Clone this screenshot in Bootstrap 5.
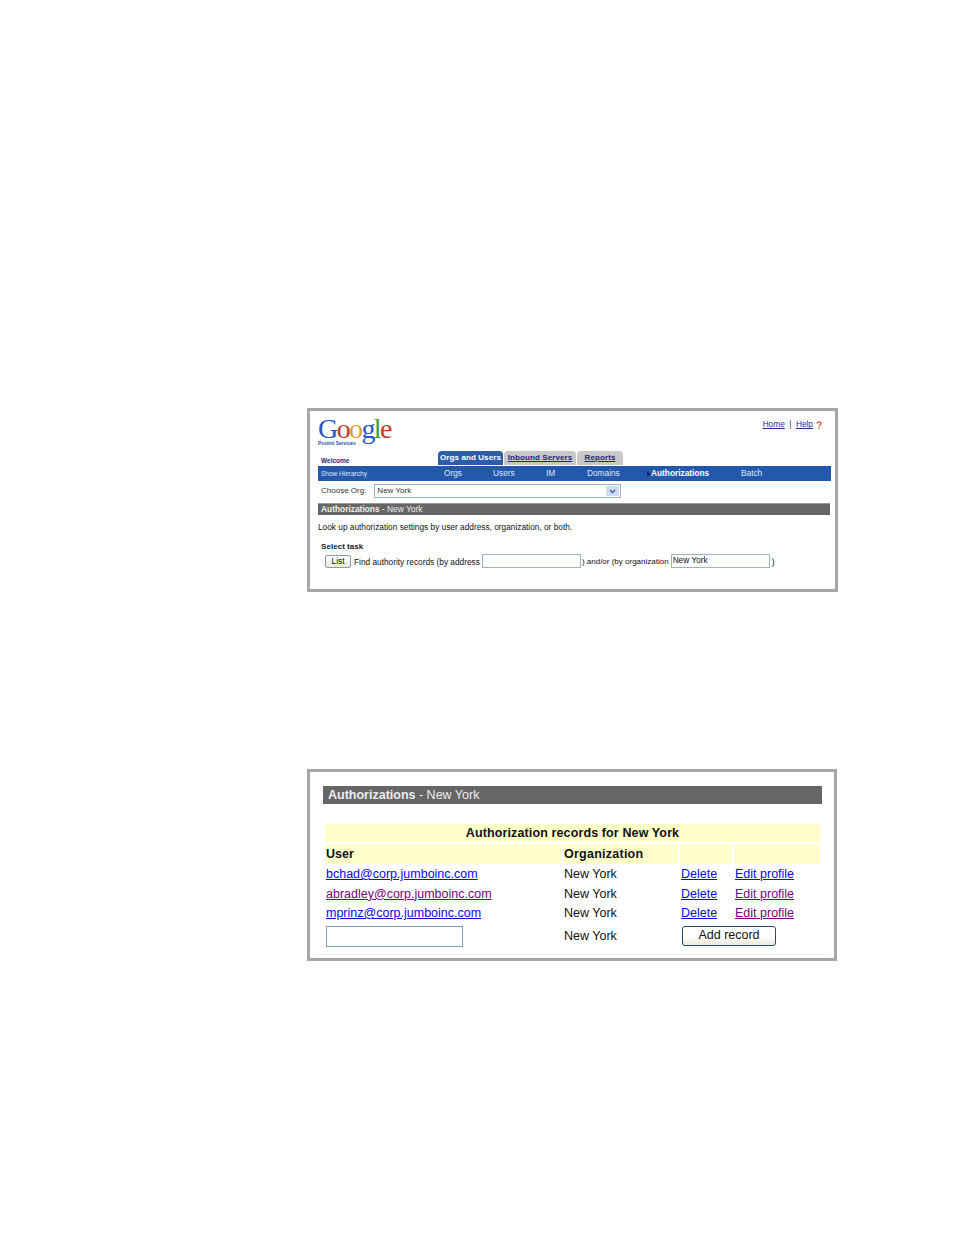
<!DOCTYPE html>
<html lang="en">
<head>
  <meta charset="UTF-8" />
  <title>Authorizations - New York</title>
  <link rel="stylesheet" href="https://cdn.jsdelivr.net/npm/bootstrap@5.3.0/dist/css/bootstrap.min.css" />
  <style>
    body {
      background: #fff;
      color: #111;
      font-family: "Liberation Sans", Arial, sans-serif;
      padding: 408px 0 0 307px;
    }
    a { color: #0a0ae6; }
    a.seen { color: #800080; }

    /* panels */
    .shot-frame {
      border: 3px solid #a6a6a6;
      background: #fff;
    }
    .shot-top { width: 531px; height: 184px; padding: 4px 4px 0 8px; font-size: 8.3px; }
    .shot-bottom { width: 530px; height: 192px; margin-top: 177px; padding: 14px 12px 0 13px; font-size: 12.5px; }

    /* top panel */
    .logo-row { height: 36px; padding-right: 9px; }
    .logo-word { font-family: "Liberation Serif", serif; font-size: 28px; line-height: 24px; letter-spacing: -1.6px; width: 76px; padding-top: 2px; height: 26px; }
    .logo-sub { font-size: 4.9px; font-weight: 700; color: #2a4fa8; line-height: 6px; width: 41px; white-space: nowrap; }
    .lg-b { color: #2a57c4; }
    .lg-r { color: #c8361f; }
    .lg-y { color: #d9a520; }
    .lg-g { color: #3c9a3c; }
    .top-links { font-size: 8.3px; padding-top: 3px; display: flex; align-items: center; height: 16px; }
    .top-links a { color: #2a2a90; }
    .top-links .sep { margin: 0 4.5px; color: #2a2a90; }
    .help-icon { margin-left: 3px; }
    .tab-row { height: 15px; }
    .welcome { width: 120px; padding-left: 3px; color: #2a2a70; font-size: 6.5px; font-weight: 700; padding-top: 5px; }
    .nav-tab {
      height: 14px;
      margin-right: 1px;
      padding-top: 1px;
      line-height: 12px;
      text-align: center;
      font-size: 8px;
      font-weight: 700;
      letter-spacing: .1px;
      border-radius: 4px 4px 0 0;
      background: #c8c8c8;
      color: #22228a;
      white-space: nowrap;
    }
    .nav-tab.on { background: #2a5ea8; color: #fff; width: 65px; }
    .tab-servers { width: 72px; }
    .tab-reports { width: 46px; }
    .nav-tab span { text-decoration: underline; }
    .blue-bar {
      background: #2458ac;
      color: #dfe8f5;
      height: 15px;
      width: 513px;
      line-height: 15px;
      position: relative;
    }
    .blue-bar > * { position: absolute; top: 0; white-space: nowrap; }
    .blue-bar .hier { left: 3px; font-size: 6.5px; }
    .blue-bar b { color: #fff; font-weight: 700; font-size: 8.3px; }
    .blue-bar svg { top: 5px; }
    .org-row { height: 22px; padding-left: 3px; padding-bottom: 2px; font-size: 8px; color: #333; }
    .org-select {
      width: 247px;
      height: 14px;
      margin-left: 8px;
      border: 1px solid #9db3c8;
      padding-left: 2px;
      line-height: 12px;
    }
    .org-arrow {
      width: 13px;
      height: 10px;
      margin: 1px;
      background: #cfdcf2;
      border-radius: 1px;
      display: flex;
      align-items: center;
      justify-content: center;
    }
    .grey-bar {
      background: #666;
      color: #eee;
      width: 512px;
      height: 12px;
      line-height: 10px;
      padding-left: 3px;
      border-top: 1px solid #999;
      font-size: 8.4px;
    }
    .intro { margin: 7px 0 0; height: 20px; line-height: 11px; }
    .sel-task { padding-left: 3px; color: #222; line-height: 10px; margin-bottom: 2px; font-weight: 600; font-size: 8.1px; }
    .task-row { padding-left: 7px; height: 14px; white-space: nowrap; gap: 2px; font-size: 8.3px; line-height: 12px; }
    .task-row > span { padding-top: 1px; }
    .task-row .and-or { font-size: 8px; margin-left: -1px; }
    .list-btn {
      width: 26px;
      height: 13px;
      border: 1px solid #8a9bb0;
      border-radius: 2px;
      background: linear-gradient(#fff, #ece9d8);
      text-align: center;
      line-height: 11px;
      margin-right: 1px;
    }
    .fake-input {
      height: 14px;
      border: 1px solid #9db3c8;
      line-height: 11px;
      padding-left: 1px;
      background: #fff;
    }

    /* bottom panel */
    .auth-head {
      background: #666;
      color: #eee;
      height: 18px;
      width: 499px;
      line-height: 18px;
      padding-left: 5px;
    }
    .auth-table {
      margin: 20px 0 0 2px;
      width: 495px;
      table-layout: fixed;
      border-collapse: separate;
      border-spacing: 0;
    }
    .auth-table td, .auth-table th { padding: 0 1px; height: 19.5px; line-height: 18px; white-space: nowrap; vertical-align: top; }
    .auth-table th { background: #ffffcc; font-weight: 700; border-bottom: 1px solid #fff; border-right: 2px solid #fff; }
    .auth-table th:last-child { border-right: 0; }
    .auth-table .rec-title { text-align: center; height: 19px; line-height: 18px; border-bottom: 2px solid #fff; letter-spacing: .12px; }
    .auth-table .head-row th { height: 21px; line-height: 20px; }
    .org-head { letter-spacing: .25px; }
    .auth-table .add-row td { padding-top: 2px; line-height: 21px; }
    .user-input { display: block; width: 137px; height: 21px; border: 1px solid #7f9db9; }
    .add-btn {
      display: block;
      width: 94px;
      height: 20px;
      margin-left: 1px;
      border: 1px solid #2c4a6b;
      border-radius: 3px;
      background: linear-gradient(#fff 55%, #ece9d8);
      text-align: center;
      line-height: 17px;
    }
    .faint-rule { height: 1px; background: #f0f0f0; margin: 7px 0 0 -6px; width: 513px; }
  </style>
</head>
<body>
  <div class="shot-frame shot-top">
    <div class="logo-row d-flex justify-content-between">
      <div>
        <div class="logo-word"><span class="lg-b">G</span><span class="lg-r">o</span><span class="lg-y">o</span><span class="lg-b">g</span><span class="lg-g">l</span><span class="lg-r">e</span></div>
        <div class="logo-sub">Postini Services</div>
      </div>
      <div class="top-links">
        <a href="#">Home</a><span class="sep">|</span><a href="#">Help</a>
        <svg class="help-icon" width="6" height="8" viewBox="0 0 6 8"><path d="M1 2.5C1 .5 5 .5 5 2.5 5 4 3 4 3 5.5" fill="none" stroke="#e0603a" stroke-width="1.4"/><rect x="2.2" y="6.3" width="1.6" height="1.6" fill="#e0a03a"/></svg>
      </div>
    </div>
    <div class="tab-row d-flex">
      <div class="welcome">Welcome</div>
      <div class="nav-tab on">Orgs and Users</div>
      <div class="nav-tab tab-servers"><span>Inbound Servers</span></div>
      <div class="nav-tab tab-reports"><span>Reports</span></div>
    </div>
    <div class="blue-bar">
      <span class="hier">Show Hierarchy</span>
      <span style="left:126px">Orgs</span>
      <span style="left:175px">Users</span>
      <span style="left:228px">IM</span>
      <span style="left:269px">Domains</span>
      <svg style="left:329px" width="4" height="6" viewBox="0 0 4 6"><path d="M0 0l4 3-4 3z" fill="#14265e"/></svg>
      <b style="left:333px">Authorizations</b>
      <span style="left:423px">Batch</span>
    </div>
    <div class="org-row d-flex align-items-center">
      <span>Choose Org:</span>
      <div class="org-select d-flex justify-content-between">
        <span>New York</span>
        <span class="org-arrow"><svg width="7" height="5" viewBox="0 0 7 5"><path d="M1 1l2.5 2.5L6 1" fill="none" stroke="#3a5a90" stroke-width="1.3"/></svg></span>
      </div>
    </div>
    <div class="grey-bar"><b>Authorizations</b> - New York</div>
    <p class="intro">Look up authorization settings by user address, organization, or both.</p>
    <div class="sel-task">Select task</div>
    <div class="task-row d-flex align-items-center">
      <div class="list-btn">List</div>
      <span>Find authority records (by address</span>
      <div class="fake-input" style="width:99px"></div>
      <span class="and-or">) and/or (by organization</span>
      <div class="fake-input" style="width:99px">New York</div>
      <span>)</span>
    </div>
  </div>

  <div class="shot-frame shot-bottom">
    <div class="auth-head"><b>Authorizations</b> - New York</div>
    <table class="auth-table">
      <colgroup><col style="width:238px"><col style="width:117px"><col style="width:54px"><col style="width:86px"></colgroup>
      <tr><th colspan="4" class="rec-title">Authorization records for New York</th></tr>
      <tr class="head-row"><th>User</th><th class="org-head">Organization</th><th></th><th></th></tr>
      <tr><td><a href="#">bchad@corp.jumboinc.com</a></td><td>New York</td><td><a href="#">Delete</a></td><td><a href="#">Edit profile</a></td></tr>
      <tr><td><a href="#" class="seen">abradley@corp.jumboinc.com</a></td><td>New York</td><td><a href="#">Delete</a></td><td><a href="#" class="seen">Edit profile</a></td></tr>
      <tr><td><a href="#">mprinz@corp.jumboinc.com</a></td><td>New York</td><td><a href="#">Delete</a></td><td><a href="#" class="seen">Edit profile</a></td></tr>
      <tr class="add-row"><td><div class="user-input"></div></td><td>New York</td><td colspan="2"><div class="add-btn">Add record</div></td></tr>
    </table>
    <div class="faint-rule"></div>
  </div>
</body>
</html>
